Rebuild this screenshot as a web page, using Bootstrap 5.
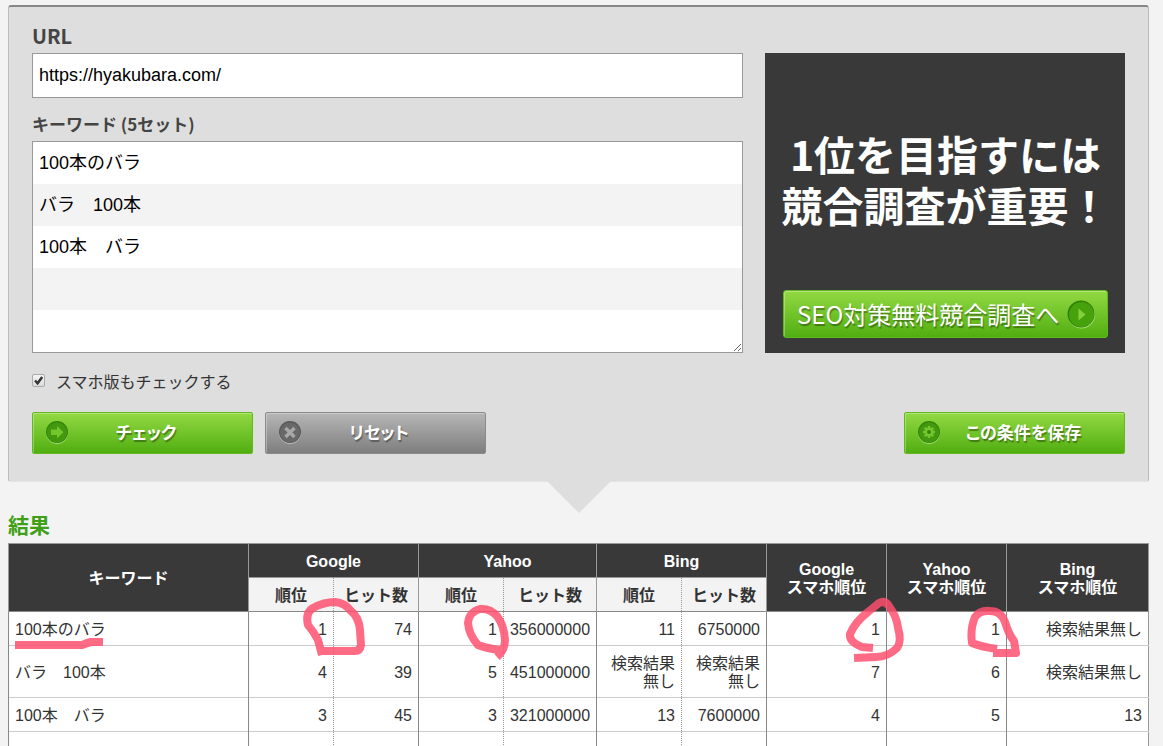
<!DOCTYPE html>
<html lang="ja">
<head>
<meta charset="utf-8">
<meta name="viewport" content="width=device-width, initial-scale=1">
<title>検索順位チェック</title>
<link href="https://cdn.jsdelivr.net/npm/bootstrap@5.3.0/dist/css/bootstrap.min.css" rel="stylesheet">
<style>
  body { background: #f3f3f3; color: #333; font-family: "Liberation Sans", "Noto Sans CJK JP", sans-serif; font-size: 16px; line-height: 18px; }
  .page { height: 100vh; padding: 5px 14px 0 8px; }
  .jp { font-family: "Noto Sans CJK JP", sans-serif; }

  /* search form panel */
  .panel { background: #dedede; border: 1px solid #bbb; border-top: 2px solid #888; border-bottom-color: #e4e4e4; border-radius: 3px; padding: 18px 23px 27px; position: relative; }
  .panel::after { content: ""; position: absolute; top: 100%; left: 50%; margin-left: -32px; border: solid transparent; border-width: 32px 32px 0; border-top-color: #dedede; }
  .field-label { display: block; color: #444; font-weight: 700; font-size: 17px; line-height: 22px; margin-bottom: 6px; }
  .field-label.url { font-size: 20px; }
  .field { border: 1px solid #999; border-radius: 0; color: #000; font-size: 18px; line-height: 42px; padding: 0 6px; background-color: #fff; }
  input.field { height: 45px; margin-bottom: 15px; }
  textarea.field { display: block; height: 212px; background: repeating-linear-gradient(#fff 0 42px, #f3f3f3 42px 84px) local; }
  .columns { gap: 22px; margin-bottom: 17px; }
  .tick { appearance: none; width: 13px; height: 13px; margin: 0 11px 2px 0; border: 1px solid #aaa; border-radius: 2px; background: linear-gradient(#f4f4f4, #dcdcdc); }
  .tick:checked { background: url("data:image/svg+xml,%3Csvg xmlns='http://www.w3.org/2000/svg' viewBox='0 0 11 11'%3E%3Cpath d='M2 5.5l2.6 2.8L9.2 2' fill='none' stroke='%23333' stroke-width='2.4'/%3E%3C/svg%3E"), linear-gradient(#f4f4f4, #dcdcdc); }
  .tick-label { line-height: 22px; font-size: 16px; }
  .check-row { margin-bottom: 20px; }

  /* glossy buttons */
  .btn-gloss { width: 221px; height: 42px; padding: 0 29px 2px 12px; border-radius: 2px; color: #fff; font-weight: 700; font-size: 17px; line-height: 24px; font-feature-settings: "palt"; text-shadow: 1px 2px 1px rgba(0,0,0,.35); box-shadow: inset 1px 1px 0 rgba(255,255,255,.3); }
  .btn-gloss svg { width: 24px; height: 24px; flex: none; }
  .btn-green, .btn-green:hover { background: linear-gradient(#93d943, #51ae11); border-color: #62b91f; color: #fff; }
  .btn-grey, .btn-grey:hover { background: linear-gradient(#b6b6b6, #7e7e7e); border-color: #8a8a8a; color: #fff; }
  .btn-save { padding-right: 18px; }

  /* banner */
  .promo { width: 360px; margin-top: 28px; background: #393939; padding: 75px 17px 15px 18px; flex: none; }
  .promo-title { color: #fff; font-weight: 700; font-size: 41px; line-height: 51px; margin: 0 -6px; text-align: center; white-space: nowrap; }
  .promo-link { height: 48px; font-size: 24px; font-weight: 400; line-height: 36px; padding: 0 10px 0 13px; border-radius: 3px; }
  .promo-link svg { width: 32px; height: 32px; }

  /* results */
  .result-title { color: #3f9f16; font-weight: 700; font-size: 21px; line-height: 26px; margin: 29px 0 6px; }
  .results { table-layout: fixed; border-collapse: collapse; width: 100%; background: #fff; border: 1px solid #999; }
  .results th, .results td { height: 34px; padding: 9px 6px 6px; border-left: 1px solid #888; border-top: 1px solid #ccc; }
  .results th { text-align: center; border-color: #999; }
  .results thead .main { background: #393939; color: #fff; }
  .results thead .sub { background: #f3f3f3; color: #333; }
  .results tbody td { text-align: right; }
  .results tbody td:first-child { text-align: left; }
  .results tbody tr:first-child td { border-top-color: #888; }
  .results .hits { border-left: 1px dotted #999; }
  .w-rank { width: 85px; }
  .w-wide { width: 93px; }
  .w-sp { width: 120px; }
  .w-last { width: 142px; }
  .marks { top: 0; left: 0; pointer-events: none; overflow: visible; }
</style>
</head>
<body>
<main class="page overflow-hidden">
  <form class="panel">
    <div class="columns d-flex">
      <div class="flex-grow-1">
        <label class="field-label url jp" for="url">URL</label>
        <input class="field form-control" id="url" type="text" value="https://hyakubara.com/">
        <label class="field-label jp" for="keywords">キーワード (5セット)</label>
        <textarea class="field form-control" id="keywords" rows="5">100本のバラ
バラ　100本
100本　バラ</textarea>
      </div>
      <aside class="promo d-flex flex-column justify-content-between">
        <p class="promo-title jp">1位を目指すには<br>競合調査が重要！</p>
        <a href="#" class="promo-link btn btn-gloss btn-green jp w-100 d-flex align-items-center justify-content-between">
          <span>SEO対策無料競合調査へ</span>
          <svg viewBox="0 0 32 32" aria-hidden="true"><circle cx="16.5" cy="17" r="13.5" fill="#a2dc72"/><circle cx="16" cy="16" r="13.5" fill="#347f06"/><circle cx="16.5" cy="16.5" r="12.5" fill="#46a20c"/><path d="M13.5 10.5v12l7-6z" fill="#85cf3b"/></svg>
        </a>
      </aside>
    </div>
    <div class="check-row d-flex align-items-center">
      <input class="tick" type="checkbox" id="sp" checked>
      <label class="tick-label jp" for="sp">スマホ版もチェックする</label>
    </div>
    <div class="d-flex">
      <button type="button" class="btn btn-gloss btn-green jp d-flex align-items-center me-2">
        <svg viewBox="0 0 24 24" aria-hidden="true"><circle cx="12" cy="13" r="11" fill="#a2dc72"/><circle cx="12" cy="12" r="11" fill="#348608"/><circle cx="12" cy="12.5" r="10" fill="#42980f"/><path d="M6 9.5h6V6l6.5 6.3L12 18.5V15H6z" fill="#73c62c"/></svg>
        <span class="flex-grow-1">チェック</span>
      </button>
      <button type="reset" class="btn btn-gloss btn-grey jp d-flex align-items-center ms-1">
        <svg viewBox="0 0 24 24" aria-hidden="true"><circle cx="12" cy="13" r="11" fill="#bbb"/><circle cx="12" cy="12" r="11" fill="#595959"/><circle cx="12" cy="12.5" r="10" fill="#686868"/><path d="M7.5 8l9 9m0-9l-9 9" stroke="#a8a8a8" stroke-width="3.4"/></svg>
        <span class="flex-grow-1">リセット</span>
      </button>
      <button type="button" class="btn btn-gloss btn-green btn-save jp d-flex align-items-center ms-auto">
        <svg viewBox="0 0 24 24" aria-hidden="true"><circle cx="12" cy="13" r="11" fill="#a2dc72"/><circle cx="12" cy="12" r="11" fill="#348608"/><circle cx="12" cy="12.5" r="10" fill="#42980f"/><g stroke="#73c62c" stroke-width="2.6"><path d="M12 6v12M6 12h12M7.8 7.8l8.4 8.4M16.2 7.8l-8.4 8.4"/></g><circle cx="12" cy="12" r="4.4" fill="#73c62c"/><circle cx="12" cy="12" r="2" fill="#348608"/></svg>
        <span class="flex-grow-1">この条件を保存</span>
      </button>
    </div>
  </form>

  <h2 class="result-title jp">結果</h2>
  <div class="position-relative">
    <table class="results">
      <colgroup>
        <col><col class="w-rank"><col class="w-rank"><col class="w-rank"><col class="w-wide"><col class="w-rank"><col class="w-rank"><col class="w-sp"><col class="w-sp"><col class="w-last">
      </colgroup>
      <thead>
        <tr>
          <th class="main" rowspan="2">キーワード</th>
          <th class="main" colspan="2">Google</th>
          <th class="main" colspan="2">Yahoo</th>
          <th class="main" colspan="2">Bing</th>
          <th class="main" rowspan="2">Google<br>スマホ順位</th>
          <th class="main" rowspan="2">Yahoo<br>スマホ順位</th>
          <th class="main" rowspan="2">Bing<br>スマホ順位</th>
        </tr>
        <tr>
          <th class="sub">順位</th><th class="sub hits">ヒット数</th>
          <th class="sub">順位</th><th class="sub hits">ヒット数</th>
          <th class="sub">順位</th><th class="sub hits">ヒット数</th>
        </tr>
      </thead>
      <tbody>
        <tr><td>100本のバラ</td><td>1</td><td class="hits">74</td><td>1</td><td class="hits">356000000</td><td>11</td><td class="hits">6750000</td><td>1</td><td>1</td><td>検索結果無し</td></tr>
        <tr><td>バラ　100本</td><td>4</td><td class="hits">39</td><td>5</td><td class="hits">451000000</td><td>検索結果無し</td><td class="hits">検索結果無し</td><td>7</td><td>6</td><td>検索結果無し</td></tr>
        <tr><td>100本　バラ</td><td>3</td><td class="hits">45</td><td>3</td><td class="hits">321000000</td><td>13</td><td class="hits">7600000</td><td>4</td><td>5</td><td>13</td></tr>
        <tr><td></td><td></td><td class="hits"></td><td></td><td class="hits"></td><td></td><td class="hits"></td><td></td><td></td><td></td></tr>
      </tbody>
    </table>
    <!-- hand-drawn marker strokes over the first-place ranks -->
    <svg class="marks position-absolute" width="1141" height="203" viewBox="8 543 1141 203" fill="none" stroke="#ff4f6e" stroke-opacity=".84" stroke-width="8" stroke-linejoin="round" aria-hidden="true">
      <path d="M15 645L82 645Q87 643 91 642L103 642"/>
      <path d="M322 655L318 640Q314 632 308 625Q305 613 313 608Q324 602 335 602Q345 603 350 610Q359 617 360 630L361 645Q360 651 355 651L322 651"/>
      <path d="M497 657Q505 650 505 640Q504 625 497 616Q490 608 480 609Q469 612 468 623Q469 635 478 645Q485 648 500 650"/>
      <path d="M873 648L862 647Q849 642 850 634Q855 622 868 612L879 603Q885 600 889 606Q897 617 898 628Q902 641 897 648Q888 657 876 657L854 658"/>
      <path d="M997 649Q982 647 972 643Q970 629 975 617Q980 610 990 611Q1001 611 1005 622Q1009 635 1014 641L1016 653L993 653"/>
    </svg>
  </div>
</main>
<script src="https://cdn.jsdelivr.net/npm/bootstrap@5.3.0/dist/js/bootstrap.bundle.min.js"></script>
</body>
</html>
